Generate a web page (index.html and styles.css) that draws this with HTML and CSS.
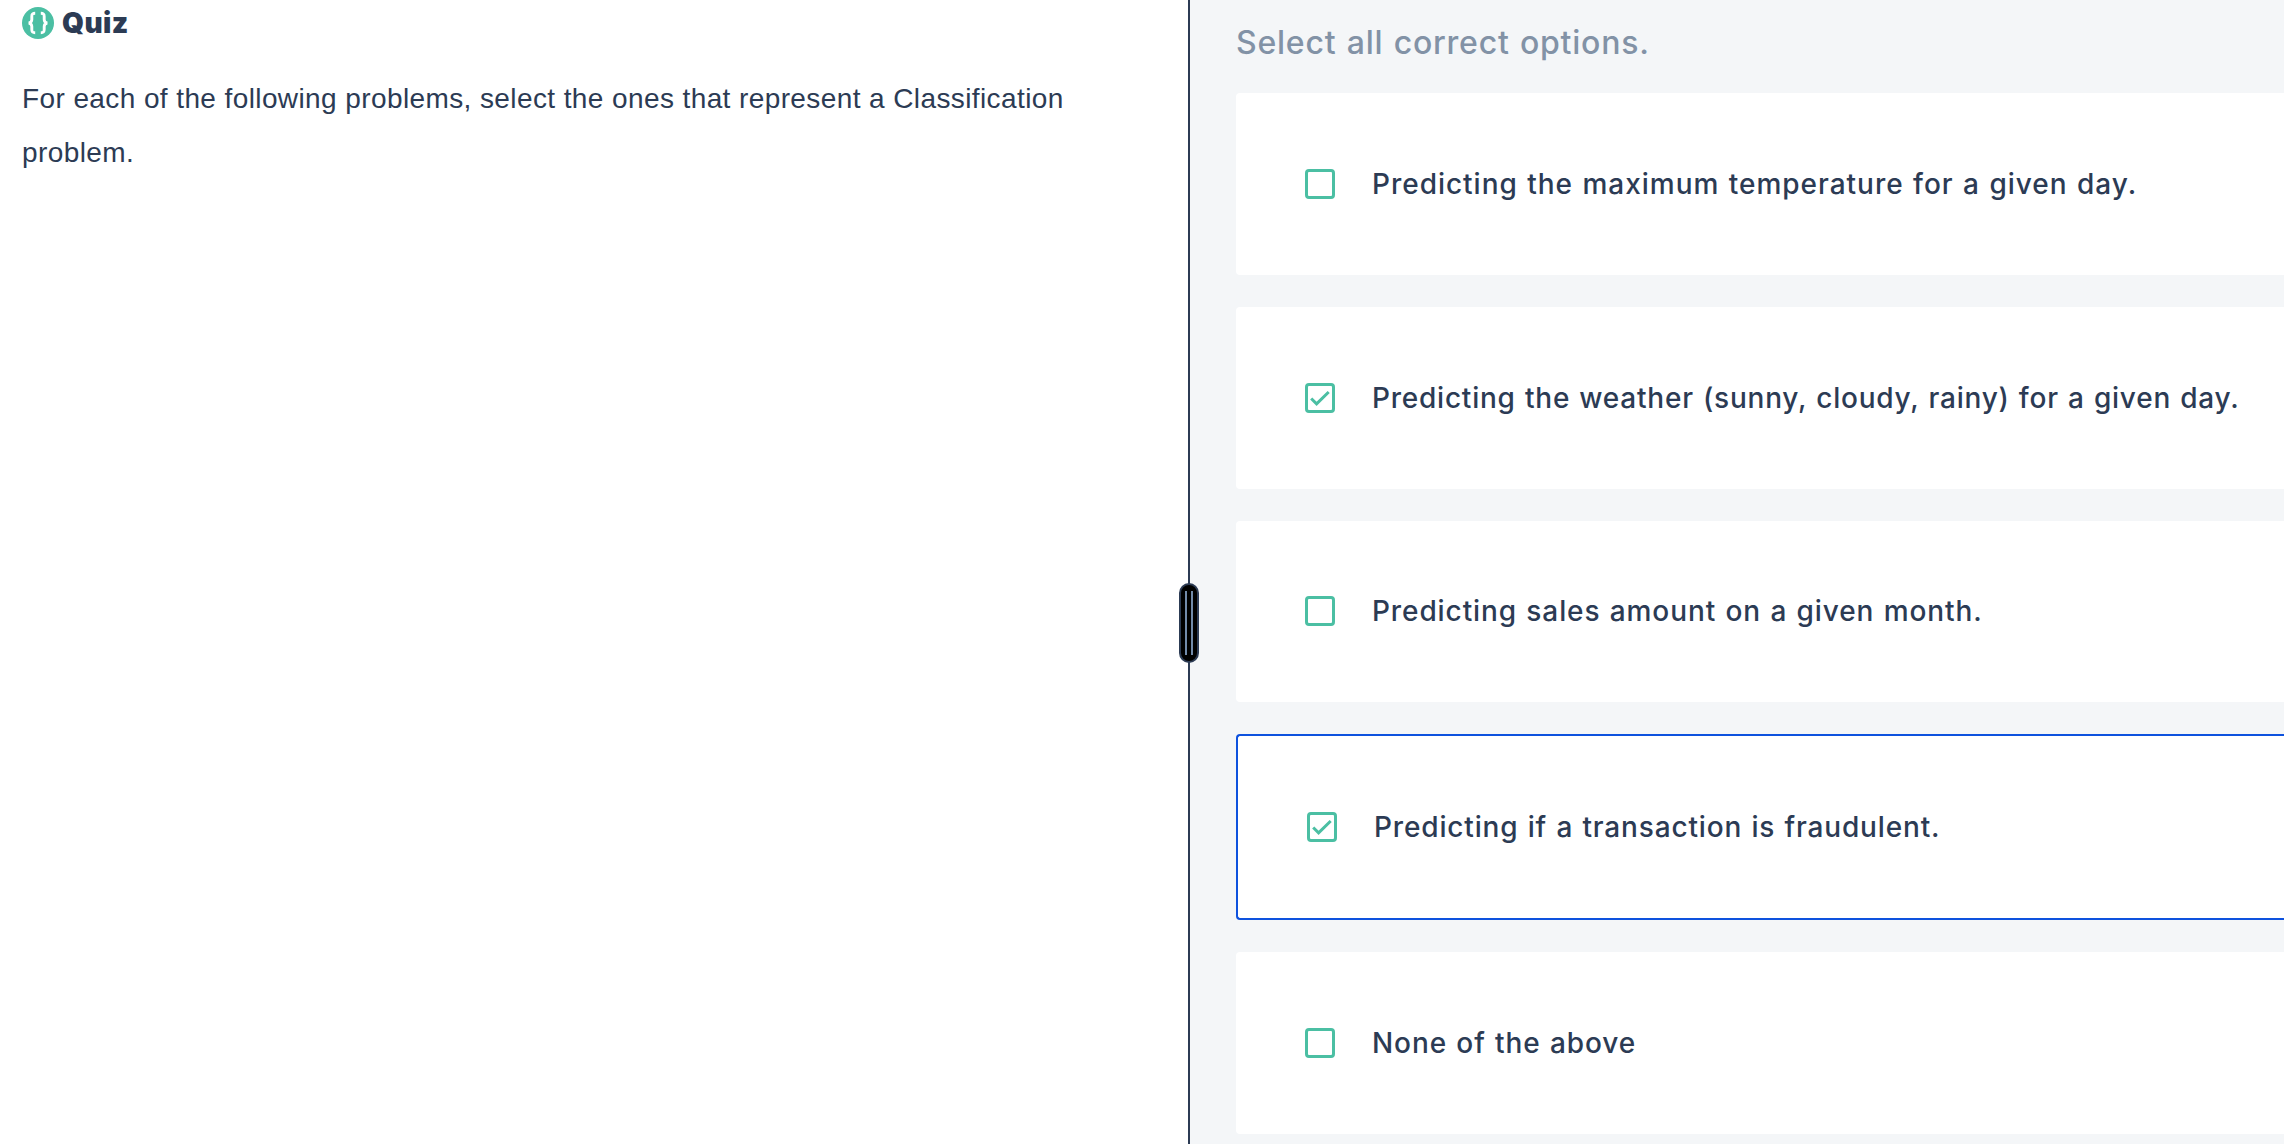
FILE: index.html
```html
<!DOCTYPE html>
<html lang="en">
<head>
<meta charset="utf-8">
<title>Quiz</title>
<link rel="stylesheet" href="styles.css">
</head>
<body>
<main class="workspace">
  <section class="question">
    <h1 class="heading">
      <svg class="logo" viewBox="0 0 32 32"><circle cx="16" cy="16" r="16" fill="#4bbfa3"/><path d="M13.2 6.3C10.400 6.300 9.800 7.200 9.800 9.400V12.400C9.800 14.600 9.100 15.500 6.800 16C9.100 16.500 9.800 17.400 9.800 19.600V22.600C9.800 24.800 10.400 25.700 13.200 25.700M18.800 6.300C21.600 6.300 22.200 7.200 22.200 9.400V12.400C22.200 14.600 22.900 15.500 25.200 16C22.900 16.500 22.200 17.400 22.200 19.600V22.600C22.200 24.800 21.600 25.700 18.800 25.700" fill="none" stroke="#fff" stroke-width="2.900"/></svg>
      <span class="title">Quiz</span>
    </h1>
    <p class="prompt">For each of the following problems, select the ones that represent a Classification problem.</p>
  </section>
  <div class="divider"><div class="handle"></div></div>
  <section class="answers">
    <h2 class="instruction">Select all correct options.</h2>
    <div class="options">
      <label class="option"><span class="box"></span><span class="label temperature">Predicting the maximum temperature for a given day.</span></label>
      <label class="option"><span class="box"><svg class="check" viewBox="0 0 24 24"><path d="M3.200 12.500L8.600 17.900L20.700 6"/></svg></span><span class="label weather">Predicting the weather (sunny, cloudy, rainy) for a given day.</span></label>
      <label class="option"><span class="box"></span><span class="label">Predicting sales amount on a given month.</span></label>
      <label class="option focused"><span class="box"><svg class="check" viewBox="0 0 24 24"><path d="M3.200 12.500L8.600 17.900L20.700 6"/></svg></span><span class="label fraud">Predicting if a transaction is fraudulent.</span></label>
      <label class="option"><span class="box"></span><span class="label">None of the above</span></label>
    </div>
  </section>
</main>
</body>
</html>
```
FILE: styles.css
```css
*, *::before { box-sizing: border-box; }
body { margin: 0; background: #fff; color: #2c3b54; }
.workspace { display: flex; height: 1144px; overflow: hidden; }
.question { flex: 0 0 1188px; padding: 7px 22px 0; }
.heading { display: flex; align-items: center; gap: 8px; height: 32px; margin: 0; }
.logo { width: 32px; height: 32px; }
.title { font: 900 28px/32px Inter, sans-serif; letter-spacing: 0.4px; }
.prompt { margin: 33px 0 0; font: 28px/54px "Liberation Sans", Arial, sans-serif; letter-spacing: 0.4px; }
.divider { position: relative; flex: 0 0 2px; background: #2c3b54; }
.handle { position: absolute; left: -9px; top: 583px; width: 20px; height: 80px; border: 2px solid #2c3b54; border-radius: 10px; background: #000; }
.handle::before { content: ""; position: absolute; left: 4px; top: 6px; width: 8px; height: 64px; border: solid #728baa; border-width: 0 2px; }
.answers { flex: 1; padding: 0 0 0 46px; background: #f4f6f8; }
.instruction { margin: 0; height: 93px; padding-top: 21px; font: 500 32px/44px Inter, sans-serif; letter-spacing: 0.78px; word-spacing: 1px; color: #8292a6; white-space: nowrap; }
.options { display: flex; flex-direction: column; gap: 32px; }
.option { display: flex; align-items: center; gap: 37px; height: 181.75px; padding-left: 69px; border-radius: 4px 0 0 4px; background: #fff; }
.focused { height: 185.75px; border: 2px solid #0e52de; border-right: 0; }
.box { display: flex; flex: none; width: 30px; height: 30px; border: 3px solid #4bbfa3; border-radius: 4px; }
.check { width: 24px; height: 24px; }
.check path { fill: none; stroke: #4bbfa3; stroke-width: 3; }
.label { font: 500 28px/40px Inter, sans-serif; letter-spacing: 0.9px; word-spacing: 1px; white-space: nowrap; }
.temperature { letter-spacing: 0.98px; }
.weather { letter-spacing: 0.77px; }
.fraud { letter-spacing: 0.84px; }
```
